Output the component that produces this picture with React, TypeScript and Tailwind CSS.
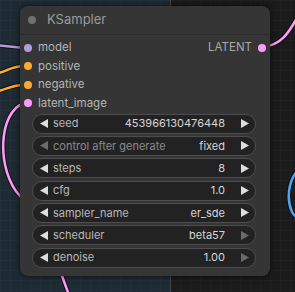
import type { ReactNode } from 'react';

type Widget = {
  label: string;
  value: string;
  dimLabel?: boolean;
  dimLeft?: boolean;
  dimRight?: boolean;
};

const inputs = [
  { name: 'model', color: 'bg-[#b19cd9]' },
  { name: 'positive', color: 'bg-[#ffa931]' },
  { name: 'negative', color: 'bg-[#ffa931]' },
  { name: 'latent_image', color: 'bg-[#ff9cf9]' },
];

const widgets: Widget[] = [
  { label: 'seed', value: '453966130476448' },
  { label: 'control after generate', value: 'fixed', dimLabel: true, dimLeft: true },
  { label: 'steps', value: '8' },
  { label: 'cfg', value: '1.0' },
  { label: 'sampler_name', value: 'er_sde' },
  { label: 'scheduler', value: 'beta57', dimRight: true },
  { label: 'denoise', value: '1.00', dimRight: true },
];

function Arrow({ dir, dim }: { dir: 'left' | 'right'; dim?: boolean }) {
  return (
    <svg width="8" height="9" viewBox="0 0 8 9" className="shrink-0">
      <path
        d={dir === 'left' ? 'M8 0 L0 4.5 L8 9 Z' : 'M0 0 L8 4.5 L0 9 Z'}
        fill={dim ? '#6b6b6b' : '#dedede'}
      />
    </svg>
  );
}

function Wire({ d, color }: { d: string; color: string }) {
  return (
    <>
      <path d={d} fill="none" stroke="#0a0a0a" strokeOpacity="0.7" strokeWidth="4.5" strokeLinecap="round" />
      <path d={d} fill="none" stroke={color} strokeWidth="2.5" strokeLinecap="round" />
    </>
  );
}

function Row({ children }: { children: ReactNode }) {
  return <div className="flex h-[18.5px] items-center">{children}</div>;
}

export default function App() {
  return (
    <div className="relative h-[292px] w-[295px] overflow-hidden bg-[#1b1b1b] bg-[linear-gradient(#202020_1px,transparent_1px),linear-gradient(90deg,#202020_1px,transparent_1px)] bg-[size:10px_10px] font-['Inter',sans-serif]">
      {/* group box behind the node */}
      <div className="absolute left-0 top-0 h-full w-[171px] border-r border-[#3a4b57] bg-[#1f2b34] bg-[linear-gradient(#233039_1px,transparent_1px),linear-gradient(90deg,#233039_1px,transparent_1px)] bg-[size:10px_10px]" />

      <svg className="absolute left-0 top-0" width="295" height="292">
        <Wire d="M-5 45 L24 48" color="#b19cd9" />
        <Wire d="M-5 74 C8 71, 12 66, 24 66" color="#ffa931" />
        <Wire d="M-5 92 C8 89, 12 85, 24 85" color="#ffa931" />
        <Wire d="M24 103 C-2 112, -4 170, 20 196 C40 220, 55 255, 70 298" color="#ff9cf9" />
        <Wire d="M262 47 C280 46, 289 34, 300 12" color="#ff9cf9" />
        <Wire d="M302 168 C290 174, 285 196, 292 212 C295 218, 299 218, 302 215" color="#4ea6f2" />
      </svg>

      <div className="absolute left-[20px] top-[6px] flex h-[270px] w-[250px] flex-col rounded-[8px] bg-[#353535] shadow-[0_0_6px_rgba(0,0,0,0.7)]">
        <div className="flex h-[29px] shrink-0 items-center gap-[11px] border-b border-[#2b2b2b] pl-[8px]">
          <span className="h-[8px] w-[8px] rounded-full bg-[#6f6f6f]" />
          <span className="text-[13px] text-[#9a9a9a]">KSampler</span>
        </div>

        <div className="flex flex-col pt-[3.5px] text-[11.5px] text-[#b4b4b4]">
          {inputs.map((inp, i) => (
            <Row key={inp.name}>
              <span className={`ml-[4px] h-[8px] w-[8px] rounded-full ${inp.color}`} />
              <span className="ml-[6px]">{inp.name}</span>
              {i === 0 && (
                <>
                  <span className="ml-auto text-[#a8a8a8]">LATENT</span>
                  <span className="ml-[6px] mr-[4px] h-[8px] w-[8px] rounded-full bg-[#ff9cf9]" />
                </>
              )}
            </Row>
          ))}
        </div>

        <div className="ml-[12px] mr-[14px] mt-[1px] flex flex-col gap-[2.35px] text-[11px]">
          {widgets.map((w) => (
            <div
              key={w.label}
              className="flex h-[20px] items-center rounded-full border border-[#4d4d4d] bg-[#222222] pl-[7px] pr-[6px]"
            >
              <Arrow dir="left" dim={w.dimLeft} />
              <span className={`ml-[5px] ${w.dimLabel ? 'text-[#8a8a8a]' : 'text-[#b8b8b8]'}`}>{w.label}</span>
              <span className="ml-auto mr-[16px] text-[#d6d6d6]">{w.value}</span>
              <Arrow dir="right" dim={w.dimRight} />
            </div>
          ))}
        </div>
      </div>
    </div>
  );
}
